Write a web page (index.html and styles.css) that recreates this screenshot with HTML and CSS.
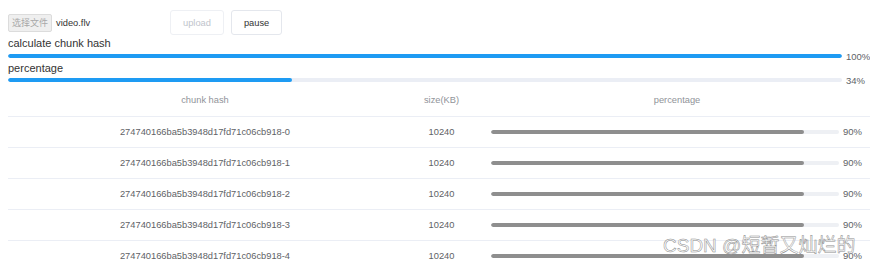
FILE: index.html
```html
<!DOCTYPE html>
<html lang="en">
  <head>
    <meta charset="UTF-8" />
    <meta name="viewport" content="width=device-width, initial-scale=1.0" />
    <title>Upload</title>
    <link rel="stylesheet" href="styles.css">
  </head>
  <body>
    <div class="page">
      <div class="toolbar">
        <div class="file-input">
          <span class="file-btn">选择文件</span>
          <span class="file-name">video.flv</span>
        </div>
        <button class="btn" disabled>upload</button>
        <button class="btn">pause</button>
      </div>

      <div class="label first">calculate chunk hash</div>
      <div class="progress">
        <div class="track"><div class="fill" style="width: 100%"></div></div>
        <span class="progress-text">100%</span>
      </div>

      <div class="label">percentage</div>
      <div class="progress">
        <div class="track"><div class="fill" style="width: 34%"></div></div>
        <span class="progress-text">34%</span>
      </div>

      <table class="chunk-table">
        <colgroup>
          <col class="col-hash" />
          <col class="col-size" />
          <col />
        </colgroup>
        <thead>
          <tr>
            <th>chunk hash</th>
            <th>size(KB)</th>
            <th>percentage</th>
          </tr>
        </thead>
        <tbody>
          <tr>
            <td>274740166ba5b3948d17fd71c06cb918-0</td>
            <td>10240</td>
            <td>
              <div class="progress small">
                <div class="track"><div class="fill" style="width: 90%"></div></div>
                <span class="progress-text">90%</span>
              </div>
            </td>
          </tr>
          <tr>
            <td>274740166ba5b3948d17fd71c06cb918-1</td>
            <td>10240</td>
            <td>
              <div class="progress small">
                <div class="track"><div class="fill" style="width: 90%"></div></div>
                <span class="progress-text">90%</span>
              </div>
            </td>
          </tr>
          <tr>
            <td>274740166ba5b3948d17fd71c06cb918-2</td>
            <td>10240</td>
            <td>
              <div class="progress small">
                <div class="track"><div class="fill" style="width: 90%"></div></div>
                <span class="progress-text">90%</span>
              </div>
            </td>
          </tr>
          <tr>
            <td>274740166ba5b3948d17fd71c06cb918-3</td>
            <td>10240</td>
            <td>
              <div class="progress small">
                <div class="track"><div class="fill" style="width: 90%"></div></div>
                <span class="progress-text">90%</span>
              </div>
            </td>
          </tr>
          <tr>
            <td>274740166ba5b3948d17fd71c06cb918-4</td>
            <td>10240</td>
            <td>
              <div class="progress small">
                <div class="track"><div class="fill" style="width: 90%"></div></div>
                <span class="progress-text">90%</span>
              </div>
            </td>
          </tr>
        </tbody>
      </table>
    </div>

    <div class="watermark">CSDN @短暂又灿烂的</div>
  </body>
</html>
```

FILE: styles.css
```css
* {
  margin: 0;
  padding: 0;
  box-sizing: border-box;
}

body {
  font-family: "Liberation Sans", "Noto Sans CJK SC", sans-serif;
  background: #fff;
  color: #333;
  padding: 10px 0 0 8px;
  overflow: hidden;
  height: 267px;
}

.page {
  width: 865px;
}

.toolbar {
  display: flex;
  align-items: center;
  height: 25px;
}

.file-input {
  width: 162px;
  display: flex;
  align-items: center;
  gap: 4px;
  padding-top: 1px;
}

.file-btn {
  display: inline-block;
  height: 18px;
  line-height: 16px;
  padding: 0 3px;
  font-family: "Noto Sans CJK SC", sans-serif;
  font-size: 9px;
  color: #a8a8a8;
  background: #efefef;
  border: 1px solid #dcdcdc;
  border-radius: 2px;
}

.file-name {
  font-size: 9.3px;
  color: #333;
}

.btn {
  height: 25px;
  padding: 0 12px;
  margin-right: 7px;
  font-family: inherit;
  font-size: 9.3px;
  color: #333;
  background: #fff;
  border: 1px solid #e4e7ed;
  border-radius: 3px;
}

.btn:disabled {
  color: #c0c4cc;
  border-color: #eef0f4;
}

.label {
  font-size: 11px;
  line-height: 12px;
  height: 12px;
  color: #333;
}

.label.first {
  margin-top: 2px;
}

.progress {
  display: flex;
  align-items: center;
  height: 12px;
}

.label.first + .progress {
  margin-top: 1px;
}

.track {
  flex: 1;
  height: 4px;
  background: #ebeef5;
  border-radius: 2px;
  overflow: hidden;
}

.fill {
  height: 100%;
  background: #1e9bf3;
  border-radius: 2px;
}

.progress-text {
  width: 27px;
  margin-left: 4px;
  font-size: 9.5px;
  color: #606266;
}

.chunk-table {
  width: 865px;
  table-layout: fixed;
  border-collapse: collapse;
  font-size: 9.3px;
  color: #606266;
}

.col-hash {
  width: 394px;
}

.col-size {
  width: 79px;
}

.chunk-table th {
  height: 30px;
  padding-bottom: 2px;
  font-weight: normal;
  color: #909399;
  text-align: center;
  border-bottom: 1px solid #ebeef5;
}

.chunk-table td {
  height: 31px;
  text-align: center;
  border-bottom: 1px solid #ebeef5;
}

.chunk-table td:last-child {
  padding: 0 5px 0 10px;
}

.progress.small .track {
  height: 4px;
  background: #eef0f4;
}

.progress.small .fill {
  background: #8e8e8e;
}

.progress.small .progress-text {
  width: 25px;
  text-align: left;
}

.watermark {
  position: absolute;
  left: 663px;
  top: 236px;
  font-family: "Liberation Sans", "Noto Sans CJK SC", sans-serif;
  font-size: 19px;
  line-height: 19px;
  color: rgba(255, 255, 255, 0.85);
  -webkit-text-stroke: 0.5px #8c8c8c;
  white-space: nowrap;
}
```
